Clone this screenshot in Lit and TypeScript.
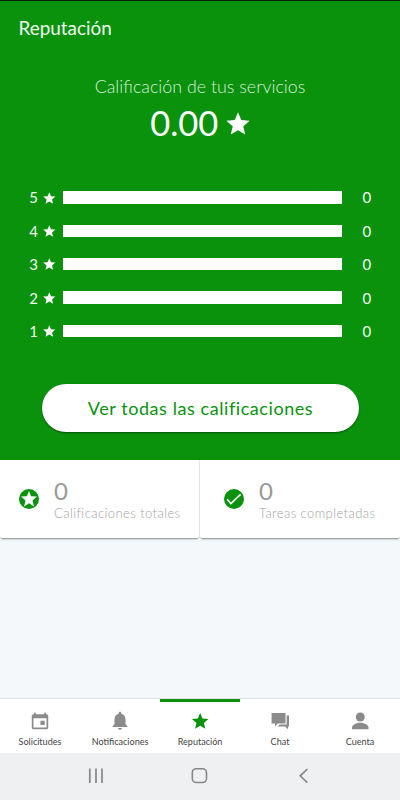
import { LitElement, html, css, svg } from "lit";
import { customElement } from "lit/decorators.js";
import { classMap } from "lit/directives/class-map.js";

const star = svg`<path fill="currentColor" d="M12 17.27L18.18 21l-1.64-7.03L22 9.24l-7.19-.61L12 2 9.19 8.63 2 9.24l5.46 4.73L5.82 21z"/>`;

const icon = (shape: unknown, name: string) =>
  html`<svg class=${name} viewBox="0 0 24 24" aria-hidden="true">${shape}</svg>`;

const starBadge = svg`<circle cx="12" cy="12" r="10" fill="#0a920d"/>
  <path fill="#fff" d="M12 3.9l2.1 5.4 5.9.3-4.5 3.8 1.5 6-5-3.2-5 3.2 1.5-6L4 9.6l5.900-.3z"/>`;
const checkBadge = svg`<circle cx="12" cy="12" r="10" fill="#0a920d"/>
  <path fill="none" stroke="#fff" stroke-width="1.6" d="M5.200 12.300l3.700 4.300 9.700-9.300"/>`;

const tabs = [
  { label: "Solicitudes", shape: svg`<path fill="currentColor" fill-rule="evenodd" d="M5.500 3h2v1.600h9V3h2v1.600h.7c1 0 1.800.8 1.800 1.800v12.800c0 1-.8 1.800-1.800 1.800H4.800c-1 0-1.800-.8-1.800-1.800V6.400c0-1 .8-1.800 1.800-1.800h.7zM4.900 9v10h14.200V9zM12.500 11.800h4.600v4.600h-4.600z"/>` },
  { label: "Notificaciones", shape: svg`<path fill="currentColor" transform="translate(0 -.5)" d="M12 22c1.100 0 2-.9 2-2h-4c0 1.100.89 2 2 2zm6-6v-5c0-3.070-1.640-5.640-4.500-6.320V4c0-.83-.67-1.500-1.500-1.500s-1.500.67-1.500 1.500v.68C7.630 5.360 6 7.920 6 11v5l-2 2v1h16v-1l-2-2z"/>` },
  { label: "Reputación", shape: svg`<g transform="translate(1.400 1.600) scale(.9)">${star}</g>`, active: true },
  { label: "Chat", shape: svg`<path fill="currentColor" transform="translate(.9 .4) scale(.95)" d="M2 3h16v12H9l-3 3.500V15H2zM19.300 6H22v12.500h-1.100v3.300l-3.400-3.300H8.800l2.700-2.300h7.800z"/>` },
  { label: "Cuenta", shape: svg`<circle cx="12.300" cy="7.600" r="4.900" fill="currentColor"/><path fill="currentColor" d="M3.300 21v-2c0-3.200 5.400-5.200 9-5.200s9 2 9 5.200v2z"/>` },
];

@customElement("app-root")
export class AppRoot extends LitElement {
  static styles = css`
    :host {
      display: flex;
      flex-direction: column;
      height: 800px;
      width: 400px;
      box-sizing: border-box;
      background: #f4f8fa;
      font-family: Lato, sans-serif;
      overflow: hidden;
    }
    * { box-sizing: border-box; }
    svg { display: block; flex: none; }
    .hero {
      height: 460px;
      flex: none;
      background: #0a920d;
      border-top: 1px solid #062306;
      color: #fff;
      display: flex;
      flex-direction: column;
    }
    .title { margin: 15px 0 1px 18.5px; font-size: 18.9px; line-height: 24px; color: #effaef; }
    .subtitle { margin-top: 33px; text-align: center; font-size: 17.85px; line-height: 24px; font-weight: 300; color: #d5efd5; }
    .score { display: flex; justify-content: center; align-items: center; height: 48px; margin-top: 2px; padding-left: 2.5px; gap: 6px; font-size: 34.5px; line-height: 48px; }
    .score span { padding-bottom: 2px; }
    .big { width: 28px; height: 28px; }
    .bars { margin-top: 32.8px; display: flex; flex-direction: column; }
    .row { height: 33.35px; display: flex; align-items: center; font-size: 15px; color: #effaef; }
    .level { width: 38px; text-align: right; }
    .small { width: 14.6px; height: 14.6px; margin: 1px 6.7px 0 3.7px; color: #fff; }
    .track { width: 279px; height: 12.3px; background: #fff; }
    .count { width: 50px; text-align: center; }
    .all {
      margin: 36.2px 0 0 42px;
      width: 317px;
      height: 48.5px;
      flex: none;
      border: 0;
      border-radius: 25px;
      background: #fff;
      color: #0a920d;
      font: 400 18px/49px Lato, sans-serif;
      letter-spacing: 0.57px;
      padding: 0;
      box-shadow: 0 1px 2px rgba(0, 0, 0, 0.45);
    }
    .stats { height: 78px; display: grid; grid-template-columns: 199px 200px; gap: 1px; flex: none; background: #e9edee; }
    .card {
      background: #fff;
      border-radius: 0 0 2px 2px;
      box-shadow: 0 2px 2px -1px rgba(0, 0, 0, 0.45);
      display: flex;
      padding: 17px 0 0 17.3px;
    }
    .card + .card { padding-left: 22.3px; }
    .badge { width: 24px; height: 24px; margin: 10px 12.7px 0 0; }
    .value { font-size: 24px; line-height: 28px; color: #999; }
    .caption { font-size: 13px; line-height: 16px; letter-spacing: 0.42px; font-weight: 300; color: #a4a4a4; white-space: nowrap; }
    .tabs { margin-top: auto; height: 54px; flex: none; display: flex; background: #fff; box-shadow: 0 -1px 1px #dfe3e4; }
    .tab { flex: 1; display: flex; flex-direction: column; align-items: center; border-top: 3px solid transparent; padding-top: 8px; color: #8b8b8b; }
    .tab.active { border-top-color: #0a920d; color: #0a920d; }
    .glyph { width: 22px; height: 22px; }
    .label { font-size: 9.05px; line-height: 12px; margin-top: 4px; color: #444; white-space: nowrap; }
    .system { height: 47px; flex: none; background: #eff0f2; display: flex; justify-content: space-between; padding: 11px 84.5px 0; }
    .key { width: 24px; height: 24px; }
  `;

  render() {
    return html`
      <section class="hero">
        <div class="title">Reputación</div>
        <div class="subtitle">Calificación de tus servicios</div>
        <div class="score"><span>0.00</span>${icon(star, "big")}</div>
        <div class="bars">
          ${[5, 4, 3, 2, 1].map((n) => html`
            <div class="row">
              <span class="level">${n}</span>${icon(star, "small")}
              <span class="track"></span><span class="count">0</span>
            </div>`)}
        </div>
        <button class="all">Ver todas las calificaciones</button>
      </section>
      <section class="stats">
        <div class="card">${icon(starBadge, "badge")}
          <div><div class="value">0</div><div class="caption">Calificaciones totales</div></div>
        </div>
        <div class="card">${icon(checkBadge, "badge")}
          <div><div class="value">0</div><div class="caption">Tareas completadas</div></div>
        </div>
      </section>
      <nav class="tabs">
        ${tabs.map((t) => html`
          <div class=${classMap({ tab: true, active: !!t.active })}>
            ${icon(t.shape, "glyph")}<span class="label">${t.label}</span>
          </div>`)}
      </nav>
      <footer class="system">
        ${icon(svg`<path d="M4.800 4.500v14.500M11 4.500v14.500M17 4.500v14.500" stroke="#85878a" stroke-width="1.700"/>`, "key")}
        ${icon(svg`<rect x="4.300" y="4.700" width="14.200" height="13.800" rx="4" fill="none" stroke="#85878a" stroke-width="1.600"/>`, "key")}
        ${icon(svg`<path d="M15.400 5l-7.200 6.800 7.200 6.800" fill="none" stroke="#85878a" stroke-width="1.700"/>`, "key")}
      </footer>
    `;
  }
}
